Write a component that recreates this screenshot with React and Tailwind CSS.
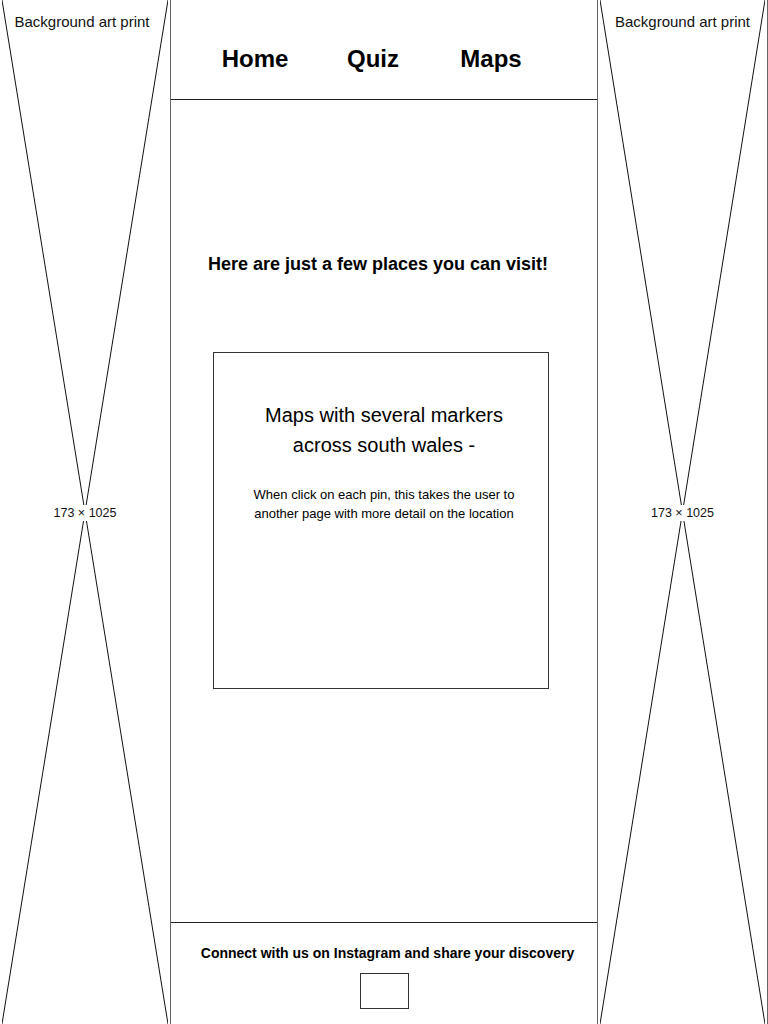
const navItems = ["Home", "Quiz", "Maps"];

const ArtPanel = ({ side }) => {
  return (
    <div
      className={`relative h-full bg-white ${
        side === "left" ? "border-r border-[#666]" : "border-x border-[#666]"
      }`}
    >
      <svg
        className="absolute top-0 bottom-0 left-[2px] right-[2px] h-full w-[calc(100%-4px)]"
        viewBox="0 0 100 100"
        preserveAspectRatio="none"
      >
        <line x1="0" y1="0" x2="100" y2="100" stroke="#111" strokeWidth="1" vectorEffect="non-scaling-stroke" />
        <line x1="100" y1="0" x2="0" y2="100" stroke="#111" strokeWidth="1" vectorEffect="non-scaling-stroke" />
      </svg>
      <div
        className={`absolute top-[13px] left-0 right-0 text-center text-[15px] leading-[18px] text-[#111] ${
          side === "left" ? "pr-[6px]" : ""
        }`}
      >
        Background art print
      </div>
      <div className="absolute top-[505px] left-0 right-0 flex justify-center">
        <span className="bg-white px-[1px] text-[12.5px] leading-[16px] text-[#111]">
          173 × 1025
        </span>
      </div>
    </div>
  );
};

export default function App() {
  return (
    <div
      className="grid h-[1024px] w-[768px] grid-cols-[171px_1fr_171px] overflow-hidden bg-white text-black"
      style={{ fontFamily: '"Liberation Sans", Arial, sans-serif' }}
    >
      <ArtPanel side="left" />

      <div className="flex h-full flex-col">
        {/* header nav */}
        <header className="h-[100px] border-b border-[#222] pt-[44px]">
          <nav className="ml-[25px] grid grid-cols-[118px_118px_118px]">
            {navItems.map((item) => (
              <a key={item} className="text-center text-[24px] font-bold leading-[30px]">
                {item}
              </a>
            ))}
          </nav>
        </header>

        {/* main content */}
        <main className="flex-1 pt-[152px]">
          <h2 className="pr-[12px] text-center text-[18px] font-bold leading-[24px]">
            Here are just a few places you can visit!
          </h2>
          <div className="ml-[42px] mt-[76px] h-[337px] w-[336px] border border-[#333] pl-[6px] pt-[47px] text-center">
            <p className="text-[20px] leading-[30px]">
              Maps with several markers
              <br />
              across south wales -
            </p>
            <p className="mt-[25px] text-[13px] leading-[19px]">
              When click on each pin, this takes the user to
              <br />
              another page with more detail on the location
            </p>
          </div>
        </main>

        {/* footer */}
        <footer className="flex h-[102px] flex-col items-center border-t border-[#222] pt-[20px]">
          <p className="pl-[7px] text-[14px] font-bold leading-[20px]">
            Connect with us on Instagram and share your discovery
          </p>
          <div className="mt-[10px] h-[36px] w-[49px] border border-[#333]"></div>
        </footer>
      </div>

      <ArtPanel side="right" />
    </div>
  );
}
